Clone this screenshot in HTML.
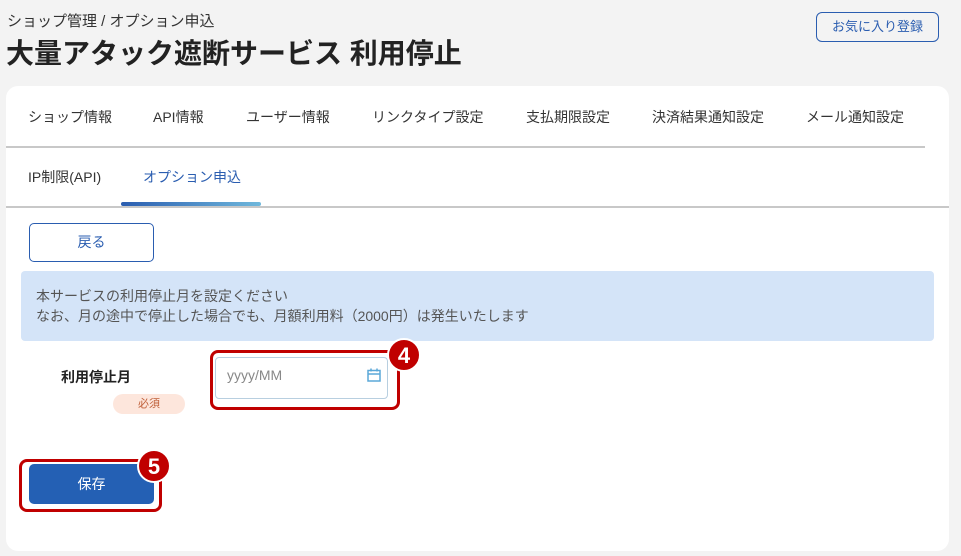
<!DOCTYPE html>
<html><head><meta charset="utf-8"><style>
body{margin:0;width:961px;height:556px;background:#f3f3f3;font-family:"Liberation Sans","Noto Sans CJK JP",sans-serif;position:relative;overflow:hidden;color:#333}
.a{position:absolute;white-space:nowrap}
.card{position:absolute;left:6px;top:86px;width:943px;height:465px;background:#fff;border-radius:12px}
.tab{position:absolute;font-size:14px;color:#333}
.badge{position:absolute;width:30px;height:30px;border-radius:50%;background:#c00000;color:#fff;font-weight:bold;font-size:22px;text-align:center;line-height:31px;border:2px solid #fff}
</style></head><body>
<div class="a" style="left:7px;top:10px;font-size:15px">ショップ管理 / オプション申込</div>
<div class="a" style="left:6px;top:32px;font-size:28px;font-weight:bold;color:#222">大量アタック遮断サービス 利用停止</div>
<div class="a" style="left:816px;top:12px;width:123px;height:30px;border:1px solid #2a5db0;border-radius:6px;box-sizing:border-box;color:#2a5db0;font-size:13px;text-align:center;line-height:28px">お気に入り登録</div>
<div class="card"></div>
<div class="tab a" style="left:28px;top:107px">ショップ情報</div>
<div class="tab a" style="left:153px;top:107px">API情報</div>
<div class="tab a" style="left:246px;top:107px">ユーザー情報</div>
<div class="tab a" style="left:372px;top:107px">リンクタイプ設定</div>
<div class="tab a" style="left:526px;top:107px">支払期限設定</div>
<div class="tab a" style="left:652px;top:107px">決済結果通知設定</div>
<div class="tab a" style="left:806px;top:107px">メール通知設定</div>
<div class="a" style="left:6px;top:146px;width:919px;height:2px;background:#c8c8c8"></div>
<div class="tab a" style="left:28px;top:167px">IP制限(API)</div>
<div class="tab a" style="left:143px;top:167px;color:#2a5db0">オプション申込</div>
<div class="a" style="left:6px;top:206px;width:943px;height:2px;background:#c8c8c8"></div>
<div class="a" style="left:121px;top:202px;width:140px;height:4px;border-radius:2px;background:linear-gradient(90deg,#2a5db0,#6fb8dc)"></div>
<div class="a" style="left:29px;top:223px;width:125px;height:39px;border:1px solid #2a5db0;border-radius:5px;box-sizing:border-box;text-align:center;line-height:37px;font-size:14px;color:#2a5db0">戻る</div>
<div class="a" style="left:21px;top:271px;width:913px;height:70px;background:#d4e4f8;border-radius:4px"></div>
<div class="a" style="left:36px;top:286px;font-size:14px;color:#555;line-height:20px">本サービスの利用停止月を設定ください<br>なお、月の途中で停止した場合でも、月額利用料（2000円）は発生いたします</div>
<div class="a" style="left:61px;top:367px;font-size:14px;font-weight:bold;color:#222">利用停止月</div>
<div class="a" style="left:113px;top:394px;width:72px;height:20px;border-radius:10px;background:#fde6dc;color:#c0603a;font-size:11px;text-align:center;line-height:20px">必須</div>
<div class="a" style="left:210px;top:350px;width:190px;height:60px;border:3px solid #c00000;border-radius:8px;box-sizing:border-box"></div>
<div class="a" style="left:215px;top:357px;width:173px;height:42px;border:1px solid #b8cfe0;border-radius:4px;box-sizing:border-box"></div>
<div class="a" style="left:227px;top:367px;font-size:14px;color:#888">yyyy/MM</div>
<svg class="a" style="left:367px;top:368px" width="14" height="14" viewBox="0 0 14 14"><rect x="1" y="2.5" width="12" height="10.5" fill="none" stroke="#5ba8d8" stroke-width="1.5"/><line x1="1" y1="6" x2="13" y2="6" stroke="#5ba8d8" stroke-width="1.5"/><line x1="4" y1="0.5" x2="4" y2="3.5" stroke="#5ba8d8" stroke-width="1.5"/><line x1="10" y1="0.5" x2="10" y2="3.5" stroke="#5ba8d8" stroke-width="1.5"/></svg>
<div class="badge" style="left:387px;top:338px">4</div>
<div class="a" style="left:19px;top:459px;width:143px;height:53px;border:3px solid #c00000;border-radius:8px;box-sizing:border-box"></div>
<div class="a" style="left:29px;top:464px;width:125px;height:40px;background:#2460b4;border-radius:5px;color:#fff;text-align:center;line-height:40px;font-size:14px">保存</div>
<div class="badge" style="left:137px;top:449px">5</div>
</body></html>
